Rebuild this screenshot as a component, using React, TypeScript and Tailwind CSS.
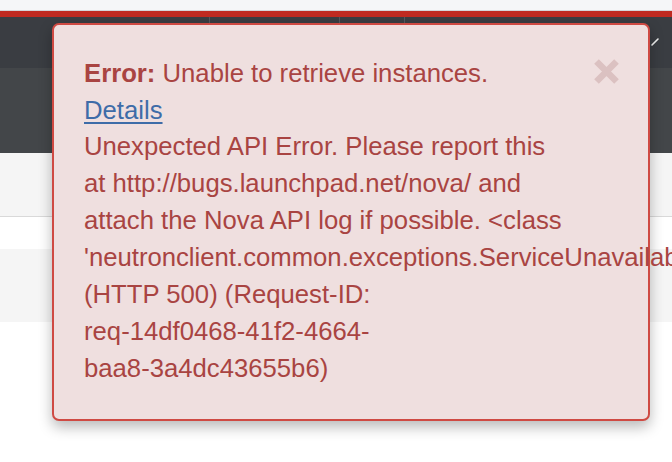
const lines = [
  'Unexpected API Error. Please report this',
  'at http://bugs.launchpad.net/nova/ and',
  'attach the Nova API log if possible. <class',
  "'neutronclient.common.exceptions.ServiceUnavailable'>",
  '(HTTP 500) (Request-ID:',
  'req-14df0468-41f2-4664-',
  'baa8-3a4dc43655b6)',
];

function Backdrop() {
  return (
    <div className="flex flex-col">
      <div className="h-[11px] border-b border-[#d4d6da] bg-[#f5f6f8]" />
      <div className="h-[6px] bg-[#bf2a21]" />
      <div className="flex h-[51px] bg-[#3a3d42]">
        <div className="w-[210px] border-r border-[#54585e]" />
        <div className="w-[130px] border-r border-[#54585e]" />
        <div className="w-[65px] border-r border-[#54585e]" />
        <div className="flex flex-1 justify-end pr-[12px] pt-[20px]">
          <svg width="10" height="10" viewBox="0 0 10 10">
            <path d="M2 8 L8 2" stroke="#f1f1f1" strokeWidth="1.6" strokeLinecap="round" />
          </svg>
        </div>
      </div>
      <div className="h-[85px] bg-[#434649]" />
      <div className="h-[64px] border-b border-[#d9d9d9] bg-[#f5f5f5]" />
      <div className="h-[32px] bg-white" />
      <div className="h-[73px] bg-[#f5f5f5]" />
      <div className="h-[139px] bg-white" />
    </div>
  );
}

function ErrorAlert() {
  return (
    <div className="absolute left-[52px] top-[23px] w-[598px] rounded-[7px] border-2 border-[#cf4a43] bg-[#efdfdf] pb-[32px] pl-[30px] pr-[26px] pt-[30px] text-[25.7px] leading-[37px] text-[#a94442] shadow-[0_6px_14px_rgba(0,0,0,0.28)]">
      <button
        type="button"
        aria-label="Close"
        className="absolute right-[28px] top-[33px] text-[#dbc1c1]"
      >
        <svg width="27" height="27" viewBox="0 0 27 27">
          <path d="M3.5 3.5 L23.5 23.5 M23.5 3.5 L3.5 23.5" stroke="currentColor" strokeWidth="6.5" />
        </svg>
      </button>
      <div className="whitespace-nowrap">
        <strong className="font-bold">Error:</strong> Unable to retrieve instances.
      </div>
      <div className="leading-[36px]">
        <a href="#" className="text-[#3e6ca8] underline decoration-[1.5px] underline-offset-[3px]">
          Details
        </a>
      </div>
      {lines.map((line) => (
        <div key={line} className="whitespace-nowrap">
          {line}
        </div>
      ))}
    </div>
  );
}

export default function App() {
  return (
    <div
      className="relative h-[462px] w-full overflow-hidden bg-white"
      style={{ fontFamily: '"Liberation Sans", Arial, sans-serif' }}
    >
      <Backdrop />
      <ErrorAlert />
    </div>
  );
}
